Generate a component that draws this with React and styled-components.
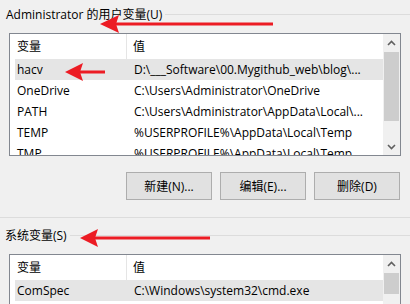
import React from "react";
import styled, { createGlobalStyle } from "styled-components";

const GlobalStyle = createGlobalStyle`
  body {
    margin: 0;
    background: #f0f0f0;
    font-family: "Open Sans", "Noto Sans CJK SC", sans-serif;
    font-size: 12px;
    color: #000;
  }
`;

const Page = styled.div`
  position: relative;
  width: 410px;
  height: 304px;
  overflow: hidden;
  background: #f0f0f0;
`;

const Group = styled.section`
  padding-top: ${(p) => p.$top}px;
  padding-bottom: ${(p) => p.$bottom}px;
  border-bottom: ${(p) => (p.$bottom ? "1px solid #dcdcdc" : "none")};
`;

const Title = styled.div`
  display: flex;
  align-items: center;
  height: 17px;
  padding-left: ${(p) => p.$indent}px;
  gap: 3px;
  white-space: nowrap;
  line-height: 17px;

  &::after {
    content: "";
    flex: 1;
    height: 1px;
    background: #dcdcdc;
  }
`;

const ListBox = styled.div`
  display: flex;
  margin: ${(p) => p.$gap}px 0 0 9px;
  width: 392px;
  height: ${(p) => p.$height}px;
  box-sizing: border-box;
  border: 1px solid #828790;
  background: #fff;
  overflow: hidden;
`;

const Viewport = styled.div`
  flex: 1;
  min-width: 0;
  overflow: hidden;
`;

const Header = styled.div`
  display: grid;
  grid-template-columns: 112px 1fr;
  height: 25px;
  margin-left: 5px;
  line-height: 25px;
`;

const HeadCell = styled.div`
  padding-left: ${(p) => (p.$first ? 2 : 6)}px;
  border-right: ${(p) => (p.$first ? "1px solid #e5e5e5" : "none")};
`;

const Row = styled.div`
  display: grid;
  grid-template-columns: 112px 1fr;
  height: 21px;
  margin-left: 5px;
  line-height: 21px;
  background: ${(p) => (p.$selected ? "#e5e5e5" : "transparent")};
`;

const Cell = styled.div`
  padding-left: ${(p) => (p.$first ? 2 : 7)}px;
  white-space: nowrap;
  overflow: hidden;
`;

const Scrollbar = styled.div`
  display: flex;
  flex-direction: column;
  width: 17px;
  background: #f0f0f0;
`;

const ScrollButton = styled.div`
  display: flex;
  align-items: center;
  justify-content: center;
  height: 17px;
  flex: none;
`;

const Track = styled.div`
  flex: 1;
  padding: 1px 1px 0;
`;

const Thumb = styled.div`
  height: ${(p) => p.$size}px;
  background: #cdcdcd;
`;

const Buttons = styled.div`
  display: flex;
  justify-content: flex-end;
  gap: 8px;
  margin-top: 16px;
  padding-right: 10px;
`;

const Button = styled.button`
  width: 86px;
  height: 28px;
  box-sizing: border-box;
  border: 1px solid #adadad;
  background: #e1e1e1;
  font: inherit;
  color: #000;
  padding: 0;
`;

const ArrowSvg = styled.svg`
  position: absolute;
  left: ${(p) => p.$x}px;
  top: ${(p) => p.$y}px;
  overflow: visible;
`;

const Chevron = ({ down }) => (
  <svg width="9" height="6" viewBox="0 0 9 6">
    <polyline
      points={down ? "1,1 4.5,4.5 8,1" : "1,5 4.5,1.5 8,5"}
      fill="none"
      stroke="#606060"
      strokeWidth="1.6"
    />
  </svg>
);

// red annotation arrow pointing left; x/y is the tip
const Arrow = ({ x, y, length, head = 19, half = 9 }) => (
  <ArrowSvg $x={x} $y={y - half} width={length} height={half * 2}>
    <rect x={head - 3} y={half - 1.5} width={length - head + 3} height="3" fill="#ec1c24" />
    <polygon
      points={`0,${half} ${head},0 ${head - 3},${half} ${head},${half * 2}`}
      fill="#ec1c24"
    />
  </ArrowSvg>
);

const userVars = [
  ["hacv", "D:\\___Software\\00.Mygithub_web\\blog\\..."],
  ["OneDrive", "C:\\Users\\Administrator\\OneDrive"],
  ["PATH", "C:\\Users\\Administrator\\AppData\\Local\\..."],
  ["TEMP", "%USERPROFILE%\\AppData\\Local\\Temp"],
  ["TMP", "%USERPROFILE%\\AppData\\Local\\Temp"],
];

const sysVars = [
  ["ComSpec", "C:\\Windows\\system32\\cmd.exe"],
  ["DriverData", "C:\\Windows\\System32\\Drivers\\DriverData"],
];

const VarList = ({ rows, height, gap, thumb }) => (
  <ListBox $height={height} $gap={gap}>
    <Viewport>
      <Header>
        <HeadCell $first>变量</HeadCell>
        <HeadCell>值</HeadCell>
      </Header>
      {rows.map(([name, value], i) => (
        <Row key={name} $selected={i === 0}>
          <Cell $first>{name}</Cell>
          <Cell>{value}</Cell>
        </Row>
      ))}
    </Viewport>
    <Scrollbar>
      <ScrollButton>
        <Chevron />
      </ScrollButton>
      <Track>
        <Thumb $size={thumb} />
      </Track>
      <ScrollButton>
        <Chevron down />
      </ScrollButton>
    </Scrollbar>
  </ListBox>
);

export default function App() {
  return (
    <Page>
      <GlobalStyle />
      <Group $top={6} $bottom={17}>
        <Title $indent={6}>Administrator 的用户变量(U)</Title>
        <VarList rows={userVars} height={123} gap={10} thumb={69} />
        <Buttons>
          <Button>新建(N)...</Button>
          <Button>编辑(E)...</Button>
          <Button>删除(D)</Button>
        </Buttons>
      </Group>
      <Group $top={9} $bottom={0}>
        <Title $indent={5}>系统变量(S)</Title>
        <VarList rows={sysVars} height={130} gap={10} thumb={21} />
      </Group>

      <Arrow x={100} y={24} length={173} />
      <Arrow x={65} y={72} length={40} head={18} />
      <Arrow x={80} y={238} length={130} head={18} />
    </Page>
  );
}
